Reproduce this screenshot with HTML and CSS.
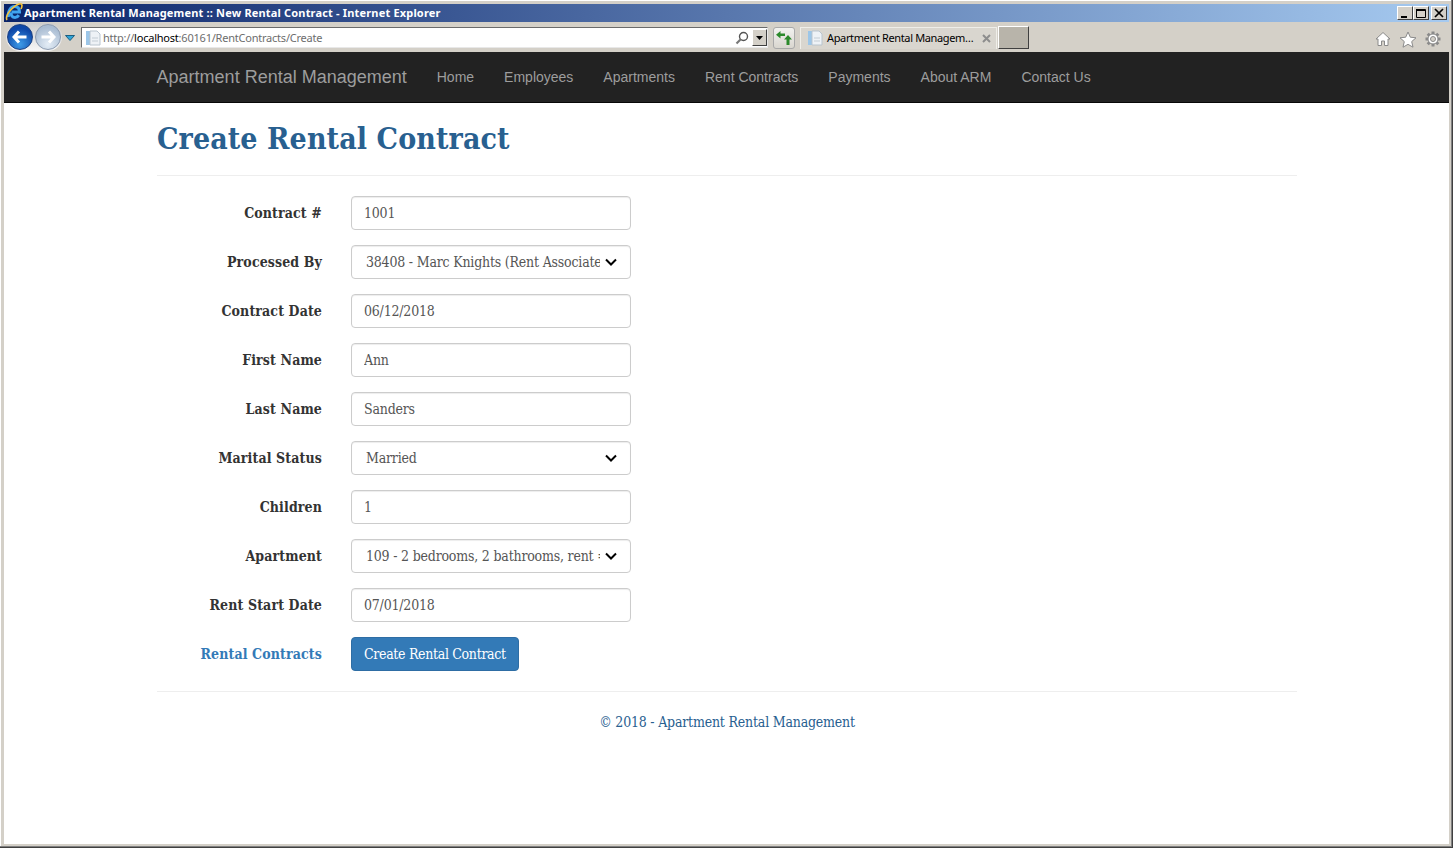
FILE: index.html
```html
<!DOCTYPE html>
<html lang="en">
<head>
<meta charset="utf-8">
<title>Apartment Rental Management :: New Rental Contract</title>
<link rel="stylesheet" href="styles.css">
</head>
<body>
<div class="window">
  <header class="titlebar">
    <svg class="ie-logo" width="18" height="20" viewBox="0 0 18 20"><path d="M3.500 15c-1-6 2.500-10.500 6-10.500 3.500 0 5 2.500 5 5.500H6.500M6 10.500c0 3 1.500 5 4 5 1.500 0 2.800-.8 3.800-2.400" fill="none" stroke="#3fa4f0" stroke-width="3"/><path d="M2 18C-.5 13.500 8 4 14 2c3.500-1 3.500 2 2 5" fill="none" stroke="#f4c23a" stroke-width="1.600"/></svg>
    <span class="title-text">Apartment Rental Management :: New Rental Contract - Internet Explorer</span>
    <div class="win-buttons">
      <span class="win-btn"><svg width="10" height="10" viewBox="0 0 10 10"><path d="M1 8h6v2H1z" fill="#000"/></svg></span>
      <span class="win-btn"><svg width="10" height="10" viewBox="0 0 10 10"><path d="M.5 1.500h9v8h-9zM.5 1v1.500h9" fill="none" stroke="#000"/></svg></span>
      <span class="win-btn win-close"><svg width="10" height="10" viewBox="0 0 10 10"><path d="M1 1l8 8M9 1l-8 8" stroke="#000" stroke-width="1.700"/></svg></span>
    </div>
  </header>
  <div class="toolbar">
    <div class="nav-orbs">
      <span class="orb orb-back"><svg width="16" height="14" viewBox="0 0 16 14"><path d="M7 1.500L2 7l5 5.500M2.500 7H14.500" fill="none" stroke="#fff" stroke-width="3"/></svg></span>
      <span class="orb orb-forward"><svg width="16" height="14" viewBox="0 0 16 14"><path d="M9 1.500L14 7l-5 5.500M13.500 7H1.500" fill="none" stroke="#fff" stroke-width="3"/></svg></span>
    </div>
    <svg class="dropdown-tri" width="10" height="6" viewBox="0 0 10 6"><path d="M.5.500h9L5 5.500z" fill="#2fa3d8" stroke="#1c5f80"/></svg>
    <div class="address">
      <svg class="page-icon" width="16" height="16" viewBox="0 0 16 16"><path d="M1 1h6v14H1z" fill="#9cc6e8"/><path d="M5 1h7l3 3v11H5z" fill="#eef2f6" stroke="#b9c4ce"/><path d="M7 8h6M7 11h6" stroke="#c3ccd4"/></svg>
      <span class="url"><span class="url-dim">http://</span><span class="url-host">localhost</span><span class="url-dim">:60161/RentContracts/Create</span></span>
      <svg class="search-icon" width="14" height="14" viewBox="0 0 14 14"><circle cx="8.500" cy="5.500" r="4" fill="none" stroke="#555" stroke-width="1.400"/><path d="M5.500 8.500L1.500 12.500" stroke="#777" stroke-width="2.200"/></svg>
      <span class="addr-drop"><svg width="7" height="4" viewBox="0 0 7 4"><path d="M0 0h7L3.500 4z" fill="#000"/></svg></span>
    </div>
    <span class="refresh"><svg width="18" height="16" viewBox="0 0 18 16"><path d="M5.500 1L1 4.800l4.500 3.700V6H10V3.500H5.500z" fill="#2c8a2c"/><path d="M13 5l-4 4.500h2.500V15H14.500V9.500H17z" fill="#2c8a2c"/></svg></span>
    <div class="tab">
      <svg class="page-icon" width="16" height="16" viewBox="0 0 16 16"><path d="M1 1h6v14H1z" fill="#9cc6e8"/><path d="M5 1h7l3 3v11H5z" fill="#eef2f6" stroke="#b9c4ce"/><path d="M7 8h6M7 11h6" stroke="#c3ccd4"/></svg>
      <span class="tab-title">Apartment Rental Managem…</span>
      <svg class="tab-close" width="9" height="9" viewBox="0 0 9 9"><path d="M1 1l7 7M8 1L1 8" stroke="#8d8d8d" stroke-width="2"/></svg>
    </div>
    <span class="new-tab"></span>
    <div class="tools">
      <svg width="16" height="16" viewBox="0 0 16 16"><path d="M8 1.500L1 8h2v6.500h3.500V10h3v4.500H13V8h2z" fill="#fff" stroke="#8a8a8a"/></svg>
      <svg width="18" height="17" viewBox="0 0 18 17"><path d="M9 1l2.300 5.200 5.700.6-4.300 3.800 1.300 5.600L9 13.300l-5 2.900 1.300-5.600L1 6.800l5.700-.6z" fill="#fff" stroke="#8a8a8a"/></svg>
      <svg width="16" height="16" viewBox="0 0 16 16"><path d="M8 .5v15M.5 8h15M2.700 2.700l10.600 10.600M13.300 2.700L2.700 13.300" stroke="#8a8a8a" stroke-width="3"/><circle cx="8" cy="8" r="5" fill="#fff" stroke="#8a8a8a"/><circle cx="8" cy="8" r="2.500" fill="#d4d0c8" stroke="#8a8a8a"/></svg>
    </div>
  </div>
  <nav class="navbar">
    <a class="brand" href="#">Apartment Rental Management</a>
    <a class="nav-link" href="#">Home</a>
    <a class="nav-link" href="#">Employees</a>
    <a class="nav-link" href="#">Apartments</a>
    <a class="nav-link" href="#">Rent Contracts</a>
    <a class="nav-link" href="#">Payments</a>
    <a class="nav-link" href="#">About ARM</a>
    <a class="nav-link" href="#">Contact Us</a>
  </nav>
  <main class="page">
    <h2 class="page-title">Create Rental Contract</h2>
    <hr class="rule rule-top">
    <form class="form">
      <label class="form-label">Contract #</label>
      <input class="control" type="text" value="1001">
      <label class="form-label">Processed By</label>
      <div class="select-wrap">
        <select class="control select"><option>38408 - Marc Knights (Rent Associate)</option></select>
        <svg class="chevron" width="12" height="8" viewBox="0 0 12 8"><path d="M1 1.500l5 5 5-5" fill="none" stroke="#000" stroke-width="2"/></svg>
      </div>
      <label class="form-label">Contract Date</label>
      <input class="control" type="text" value="06/12/2018">
      <label class="form-label">First Name</label>
      <input class="control" type="text" value="Ann">
      <label class="form-label">Last Name</label>
      <input class="control" type="text" value="Sanders">
      <label class="form-label">Marital Status</label>
      <div class="select-wrap">
        <select class="control select"><option>Married</option></select>
        <svg class="chevron" width="12" height="8" viewBox="0 0 12 8"><path d="M1 1.500l5 5 5-5" fill="none" stroke="#000" stroke-width="2"/></svg>
      </div>
      <label class="form-label">Children</label>
      <input class="control" type="text" value="1">
      <label class="form-label">Apartment</label>
      <div class="select-wrap">
        <select class="control select"><option>109 - 2 bedrooms, 2 bathrooms, rent = 1150/month</option></select>
        <svg class="chevron" width="12" height="8" viewBox="0 0 12 8"><path d="M1 1.500l5 5 5-5" fill="none" stroke="#000" stroke-width="2"/></svg>
      </div>
      <label class="form-label">Rent Start Date</label>
      <input class="control" type="text" value="07/01/2018">
      <a class="form-label back-link" href="#">Rental Contracts</a>
      <div class="actions"><button class="btn" type="button">Create Rental Contract</button></div>
    </form>
    <hr class="rule rule-bottom">
    <footer class="footer">© 2018 - Apartment Rental Management</footer>
  </main>
</div>
</body>
</html>
```
FILE: styles.css
```css
* { box-sizing: border-box; }
html, body { margin: 0; padding: 0; }
body { background: #fff; overflow: hidden; }
.window {
  position: relative;
  width: 1453px;
  height: 848px;
  display: flex;
  flex-direction: column;
  background: #d4d0c8;
  border: 4px solid #d4d0c8;
}
.window::after {
  content: "";
  position: absolute;
  inset: -4px;
  pointer-events: none;
  box-shadow: inset -1px -1px 0 #404040, inset -2px -2px 0 #808080, inset 1px 1px 0 #fff;
}
.titlebar {
  height: 18px;
  flex: none;
  display: flex;
  align-items: center;
  background: linear-gradient(90deg, #0a246a, #a6caf0);
  color: #fff;
  font: bold 11px "Noto Sans", sans-serif;
}
.ie-logo { margin: -2px 1px 0 1px; flex: none; }
.title-text { white-space: nowrap; letter-spacing: .175px; margin-top: -2px; }
.win-buttons { margin-left: auto; display: flex; padding-right: 2px; }
.win-btn {
  width: 16px;
  height: 14px;
  display: flex;
  align-items: center;
  justify-content: center;
  background: #d4d0c8;
  border: 1px solid;
  border-color: #fff #404040 #404040 #fff;
}
.win-close { margin-left: 2px; }
.toolbar {
  height: 30px;
  flex: none;
  display: flex;
  align-items: center;
  font: 11px "Noto Sans", sans-serif;
}
.nav-orbs {
  display: flex;
  gap: 2px;
  margin-left: 2px;
  padding: 1px;
  border-radius: 14px;
  background: linear-gradient(#ccc, #f6f6f6);
}
.orb {
  width: 26px;
  height: 26px;
  border-radius: 50%;
  display: flex;
  align-items: center;
  justify-content: center;
}
.orb-back { background: radial-gradient(circle at 50% 80%, #3d9be8, #0d47a8 70%); border: 1px solid #1a3f80; }
.orb-forward { background: radial-gradient(circle at 50% 80%, #e4edf6, #a9bcd2 75%); border: 1px solid #8c9bb0; }
.dropdown-tri { margin: 2px 6px 0 3px; flex: none; }
.address {
  width: 687px;
  height: 21px;
  margin-top: 1px;
  display: flex;
  align-items: center;
  background: #fff;
  border: 1px solid;
  border-color: #6b6b6b #e8e8e8 #e8e8e8 #6b6b6b;
  padding-left: 3px;
}
.page-icon { flex: none; }
.url { margin-left: 2px; white-space: nowrap; letter-spacing: -.22px; }
.url-dim { color: #6d6d6d; }
.url-host { color: #000; }
.search-icon { margin-left: auto; margin-right: 3px; flex: none; }
.addr-drop {
  width: 15px;
  height: 17px;
  display: flex;
  align-items: center;
  justify-content: center;
  background: #d4d0c8;
  border: 1px solid;
  border-color: #fff #404040 #404040 #fff;
}
.refresh {
  width: 22px;
  height: 22px;
  margin-left: 5px;
  margin-top: 1px;
  display: flex;
  align-items: center;
  justify-content: center;
  border: 1px solid #a9a9a9;
  border-radius: 3px;
  background: linear-gradient(#f2f2f0, #d9d6cf);
}
.tab {
  width: 197px;
  height: 22px;
  margin-left: 5px;
  margin-top: 1px;
  display: flex;
  align-items: center;
  padding-left: 6px;
  background: #d9d6cf;
  border: 1px solid #efeee9;
  border-bottom: 0;
}
.tab-title { margin-left: 4px; margin-top: -2px; white-space: nowrap; color: #000; letter-spacing: -.36px; }
.tab-close { margin-left: auto; margin-right: 5px; flex: none; }
.new-tab {
  width: 31px;
  height: 23px;
  margin-left: 1px;
  background: #b8b4aa;
  border: 1px solid;
  border-color: #fff #404040 #404040 #fff;
}
.tools {
  margin-left: auto;
  margin-right: 8px;
  display: flex;
  gap: 8px;
  align-items: center;
  padding-top: 4px;
}
.navbar {
  height: 51px;
  flex: none;
  display: flex;
  align-items: center;
  padding-left: 152.6px;
  background: #222;
  border-bottom: 1px solid #080808;
  font-family: "Liberation Sans", Arial, sans-serif;
}
.brand {
  font-size: 18px;
  color: #9d9d9d;
  text-decoration: none;
  margin-right: 15px;
}
.nav-link {
  font-size: 14px;
  color: #9d9d9d;
  text-decoration: none;
  padding: 0 15px;
}
.page {
  flex: 1;
  background: #fff;
  padding: 0 152px 0 153px;
  font: 14px "DejaVu Serif Condensed", "Liberation Serif", serif;
  letter-spacing: -.2px;
  color: #555;
  overflow: hidden;
}
.page-title {
  margin: 0;
  padding-top: 19px;
  font: bold 30px/1.1 "DejaVu Serif Condensed", "Liberation Serif", serif;
  letter-spacing: .1px;
  color: #286090;
}
.rule { border: 0; border-top: 1px solid #eee; margin: 0; }
.rule-top { margin-top: 20px; }
.form {
  display: grid;
  grid-template-columns: 165px 280px;
  column-gap: 29px;
  row-gap: 15px;
  align-items: center;
  margin-top: 20px;
}
.form-label {
  text-align: right;
  font-weight: bold;
  color: #333;
  letter-spacing: .12px;
}
.back-link { color: #337ab7; text-decoration: none; }
.control {
  display: block;
  width: 280px;
  height: 34px;
  padding: 6px 12px;
  font: inherit;
  letter-spacing: inherit;
  color: #555;
  background: #fff;
  border: 1px solid #ccc;
  border-radius: 4px;
  box-shadow: inset 0 1px 1px rgba(0,0,0,.075);
  outline: 0;
}
.select-wrap { position: relative; width: 280px; height: 34px; }
.select {
  appearance: none;
  -webkit-appearance: none;
  padding-left: 14px;
  padding-right: 30px;
}
.chevron { position: absolute; right: 14px; top: 13px; pointer-events: none; }
.btn {
  display: block;
  height: 34px;
  padding: 6px 12px;
  font: inherit;
  letter-spacing: -.32px;
  color: #fff;
  background: #337ab7;
  border: 1px solid #2e6da4;
  border-radius: 4px;
}
.rule-bottom { margin-top: 20px; }
.footer {
  margin-top: 20px;
  text-align: center;
  line-height: 20px;
  color: #286090;
}
```
